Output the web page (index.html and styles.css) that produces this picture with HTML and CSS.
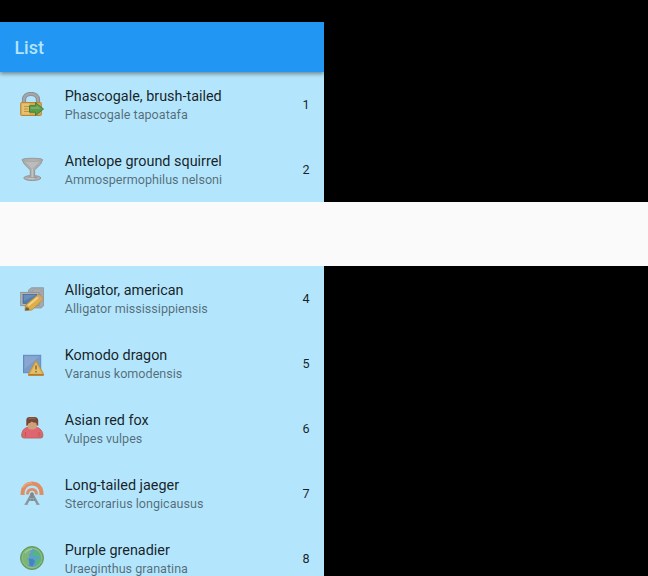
FILE: index.html
```html
<!DOCTYPE html>
<html lang="en">
<head>
<meta charset="utf-8">
<title>List</title>
<link rel="stylesheet" href="styles.css">
</head>
<body>
<main class="screen">
  <header class="app-bar"><h1 class="app-title">List</h1></header>
  <ul class="list">
    <li class="tile">
      <svg class="icon" viewBox="0 0 24 24">
        <path d="M4 13V8Q4 2 11 2T18 8V13" fill="none" stroke="#858d92" stroke-width="4.200"/>
        <path d="M4 12V8Q4 2 11 2T18 8V12" fill="none" stroke="#a2a6a9" stroke-width="2.400"/>
        <rect x=".7" y="10.500" width="20.600" height="13" rx=".8" fill="#d8a850" stroke="#bd8337"/>
        <rect x="1.700" y="11.500" width="8" height="11" fill="#e8c878" opacity=".8"/>
        <path d="M4 14.500h6M4 17h4M4 19.500h6" stroke="#bd8b3c" stroke-width=".9"/>
        <path d="M9.500 13.700h6v-3l8 6.300-8 6.500v-3.300h-6z" fill="#5a9d4b" stroke="#408337"/>
        <path d="M10.500 15h6.200v-1.800l4.500 3.700H10.500z" fill="#8bb96f" opacity=".6"/>
      </svg>
      <div class="body"><div class="name">Phascogale, brush-tailed</div><div class="species">Phascogale tapoatafa</div></div>
      <span class="number">1</span>
    </li>
    <li class="tile">
      <svg class="icon" viewBox="0 0 24 24">
        <ellipse cx="12.300" cy="21" rx="8.500" ry="2.500" fill="#b2b1b1" stroke="#8d8f90" stroke-width=".9"/>
        <path d="M2 2.700C3 .8 21.700.8 22.600 2.700L20.700 7 14.600 13v5.500q0 1.500 2.500 2H8q2.300-.5 2.300-2V13L4.300 7Z" fill="#acadad" stroke="#969899" stroke-width="1"/>
        <path d="M5 4.500l7.200 7.400L19.600 4.500z" fill="#bcbcbc"/>
        <ellipse cx="12.300" cy="3" rx="9.700" ry="1.300" fill="#b4b4b4" stroke="#9a9c9d" stroke-width=".6"/>
        <path d="M12.300 12v8M8 21.300h6" stroke="#c8c7c6" stroke-width="1.200"/>
      </svg>
      <div class="body"><div class="name">Antelope ground squirrel</div><div class="species">Ammospermophilus nelsoni</div></div>
      <span class="number">2</span>
    </li>
    <li class="gap"></li>
    <li class="tile">
      <svg class="icon" viewBox="0 0 24 24">
        <path d="M8.500 3L11.500.7H23.500V19L21 21H9z" fill="#a4a9ac" stroke="#858c91" stroke-width=".7"/>
        <path d="M13 3.300h8v1.500h-8zM18.500 7.500h3M18.500 10h3" fill="#cbcdce" stroke="#8c9296" stroke-width=".6"/>
        <rect x=".7" y="5.300" width="18.300" height="13.400" fill="#b4b5b3" stroke="#858b8f" stroke-width=".8"/>
        <rect x="3" y="7.300" width="13.800" height="9" fill="#557eaf" stroke="#3b6090" stroke-width=".7"/>
        <path d="M3.500 7.800h13L4 14z" fill="#7d9dc0" opacity=".5"/>
        <path d="M4.500 19.300h5.200v4H5z" fill="#aba6a0"/>
        <path d="M5 23.500L6.200 17.500 17.500 8q2.300-.9 5 2.200.9 1.500 0 2.800L12 23z" fill="#dcae4a" stroke="#b68a3c" stroke-width=".8"/>
        <path d="M8 18.800L18.500 10" stroke="#f2d382" stroke-width="2"/>
        <path d="M16.800 9.500L18 8.500q1.900-.9 4.200 2 .9 1.300.1 2.500l-1.200.9z" fill="#cda38a" opacity=".8"/>
        <path d="M5 23.500l1-3.300 2.500.6 1 2.300z" fill="#755d3c"/>
      </svg>
      <div class="body"><div class="name">Alligator, american</div><div class="species">Alligator mississippiensis</div></div>
      <span class="number">4</span>
    </li>
    <li class="tile">
      <svg class="icon" viewBox="0 0 24 24">
        <rect x="3.500" y="3.300" width="17.200" height="17.400" fill="#789bca" stroke="#628bc0"/>
        <path d="M4.500 4.300h15L4.500 17z" fill="#a0b6d8" opacity=".4"/>
        <path d="M15.300 9.500q.7-.8 1.400 0l6.800 12.200v1.800H8.500v-1.800z" fill="#d3a952" stroke="#c28c3c" stroke-width=".8"/>
        <path d="M16 10.700l6 11H10z" fill="#e3be68"/>
        <path d="M8.500 22h15v1.500h-15z" fill="#b87a2d"/>
        <path d="M16 13.500v4M16 19v1.600" stroke="#947533" stroke-width="1.700"/>
      </svg>
      <div class="body"><div class="name">Komodo dragon</div><div class="species">Varanus komodensis</div></div>
      <span class="number">5</span>
    </li>
    <li class="tile">
      <svg class="icon" viewBox="0 0 24 24">
        <path d="M7 11.500C3.500 12.500 1.800 15.500 1.700 19q-.2 3 2 3h17.200q2.200 0 2-3C22.700 15.500 20.500 12.500 17.500 11.500z" fill="#df6670" stroke="#c25c66" stroke-width=".9"/>
        <path d="M1.800 18.500q2.700-.5 3.300 3.300H3.500q-1.900-.2-1.700-3.300M22.800 18.500q-2.700-.5-3.500 3.300H21q2-.2 1.800-3.300" fill="#b87858"/>
        <path d="M5.500 20.500V16M19 20.500V16" stroke="#bb4c58" stroke-width=".8"/>
        <path d="M7.500 5h9.500v5.300q0 3-4.700 3.300T7.500 10.300z" fill="#d09e7a"/>
        <path d="M6.300 10V4Q6.500 1 9.500 1h5q3.500 0 3.700 3.500V10q-1.800-.5-2-3.300-3 0-4.500-1.300-1.600 2-3.200 1.800-.3 2.500-2.200 2.800z" fill="#734936"/>
        <path d="M8.500 3q3-1.500 7 0" fill="none" stroke="#926247" stroke-width="1.300"/>
      </svg>
      <div class="body"><div class="name">Asian red fox</div><div class="species">Vulpes vulpes</div></div>
      <span class="number">6</span>
    </li>
    <li class="tile">
      <svg class="icon" viewBox="0 0 24 24">
        <path d="M2.600 14V11.500C3.500 5.500 6.500 2.500 12 2.500s8.700 3 9.500 9V14" fill="none" stroke="#df8d62" stroke-width="4"/>
        <path d="M7.500 13.500q0-5.200 4.500-5.200t4.500 5.200" fill="none" stroke="#df8d64" stroke-width="2.800"/>
        <path d="M3 6.500Q6 1.500 12 2" fill="none" stroke="#eda981" stroke-width="1.200"/>
        <path d="M12 12.500L6 23.500M12 12.500L18 23.500" stroke="#899399" stroke-width="2.400"/>
        <path d="M9.200 19h5.800M10.500 16h3M12 12v8" stroke="#79858b" stroke-width="1.300"/>
        <path d="M4.500 23.300h3M16.500 23.300h3" stroke="#94a0a5" stroke-width="1.200"/>
        <circle cx="12" cy="13" r="1.700" fill="#7d8589"/>
      </svg>
      <div class="body"><div class="name">Long-tailed jaeger</div><div class="species">Stercorarius longicausus</div></div>
      <span class="number">7</span>
    </li>
    <li class="tile">
      <svg class="icon" viewBox="0 0 24 24">
        <circle cx="12" cy="12" r="11.500" fill="#6fa96a" stroke="#609657" stroke-width=".9"/>
        <circle cx="12" cy="12" r="9.700" fill="#5c9fc8" stroke="#96bb85" stroke-width="1.300"/>
        <path d="M4 6.500Q6.500 2.500 11 2.600L9.500 5l1.700 1.300L8.500 8.800l1 2.500-2.500 2 2.500 3.300L8 20Q2.700 17 2.600 12z" fill="#7bb774"/>
        <path d="M12.500 7l3-3q4 2 5.500 6l-2.700 1-2.500-1.500-2.800.5zM17 13l4.500-.8q-.8 5-4.700 7.400l-1.500-2z" fill="#54b77c"/>
        <path d="M9 12.500l4 .5 2 2.500-2.500 5-3-1z" fill="#4386bd"/>
        <path d="M5 7Q8 3 12 3.500" fill="none" stroke="#bad7b8" stroke-width="1.200" opacity=".7"/>
      </svg>
      <div class="body"><div class="name">Purple grenadier</div><div class="species">Uraeginthus granatina</div></div>
      <span class="number">8</span>
    </li>
  </ul>
</main>
</body>
</html>
```
FILE: styles.css
```css
* { box-sizing: border-box; }
html, body { height: 100%; }
body {
  margin: 0;
  overflow: hidden;
  background: #000;
  font-family: Roboto, sans-serif;
}
.screen {
  height: 576px;
  padding-top: 21.6px;
  overflow: hidden;
}
.app-bar {
  position: relative;
  display: flex;
  align-items: center;
  width: 324px;
  height: 50.4px;
  padding: 2.4px 14.4px 0;
  background: #2196f3;
  box-shadow: 0 2px 4px rgba(0, 0, 0, .4);
  clip-path: inset(0 0 -10px 0);
}
.app-title {
  margin: 0;
  color: #b3e5fc;
  font-size: 18px;
  font-weight: 500;
  line-height: 22px;
}
.list {
  margin: 0;
  padding: 0;
  list-style: none;
}
.tile {
  display: flex;
  align-items: center;
  width: 324px;
  height: 64.8px;
  padding: 0 14.4px 0 20.4px;
  background: #b3e5fc;
}
.gap {
  width: 648px;
  height: 64.8px;
  background: #fafafa;
}
.icon {
  flex: none;
  width: 24px;
  height: 24px;
  filter: blur(.35px);
}
.body {
  flex: 1;
  margin-left: 20.4px;
  padding-top: 1.8px;
  white-space: nowrap;
}
.name {
  color: rgba(0, 0, 0, .87);
  font-size: 14.4px;
  line-height: 19px;
}
.species {
  color: rgba(0, 0, 0, .54);
  font-size: 12.6px;
  line-height: 17.4px;
}
.number {
  padding-top: 1.2px;
  color: rgba(0, 0, 0, .87);
  font-size: 12.6px;
  line-height: 18px;
}
```
